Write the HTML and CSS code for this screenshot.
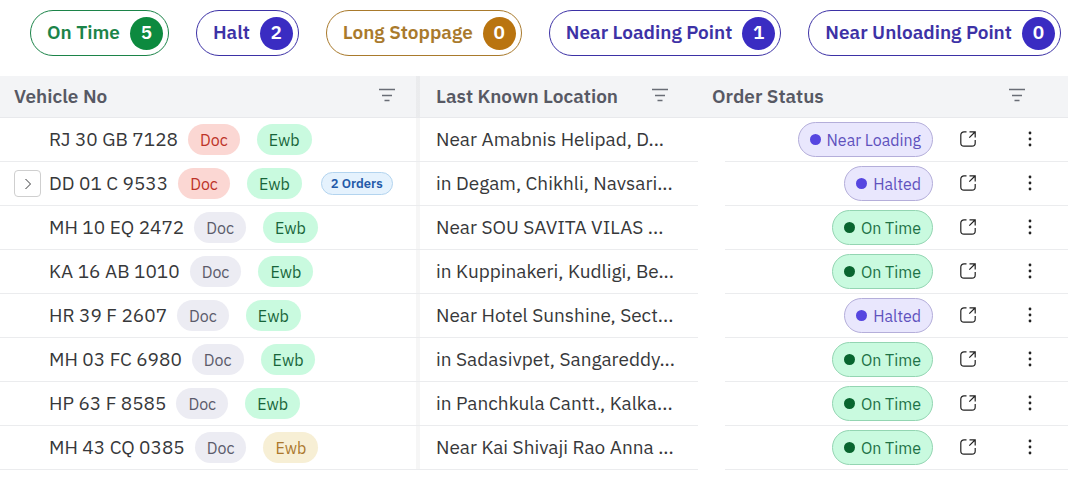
FILE: index.html
```html
<!DOCTYPE html>
<html lang="en">
<head>
<meta charset="utf-8">
<title>Vehicles</title>
<link rel="stylesheet" href="styles.css">
<script src="table.js" defer></script>
</head>
<body>
<svg class="sprite" aria-hidden="true">
  <symbol id="filter" viewBox="0 0 16 14"><path d="M0 1.500h16M3 7.500h10M5.500 12.500h5"/></symbol>
  <symbol id="open" viewBox="0 0 16 16"><path d="M6.500 .8H4a3.200 3.200 0 0 0-3.200 3.200v8A3.200 3.200 0 0 0 4 15.200h8a3.200 3.200 0 0 0 3.200-3.200V9M9.500 .8h5.700v5.700M15 1L9.300 6.700"/></symbol>
  <symbol id="more" viewBox="0 0 4 16"><circle cx="2" cy="2" r="1.400"/><circle cx="2" cy="8" r="1.400"/><circle cx="2" cy="14" r="1.400"/></symbol>
  <symbol id="chevron" viewBox="0 0 8 12"><path d="M1.500 1l5 5-5 5"/></symbol>
</svg>

<nav class="chips" aria-label="Status filters">
  <button class="chip green" type="button"><span class="text">On Time</span><span class="count">5</span></button>
  <button class="chip indigo" type="button"><span class="text">Halt</span><span class="count">2</span></button>
  <button class="chip amber" type="button"><span class="text">Long Stoppage</span><span class="count">0</span></button>
  <button class="chip indigo" type="button"><span class="text">Near Loading Point</span><span class="count">1</span></button>
  <button class="chip indigo" type="button"><span class="text">Near Unloading Point</span><span class="count">0</span></button>
</nav>

<table class="vehicles">
  <colgroup><col class="col-vehicle"><col class="col-location"><col></colgroup>
  <thead>
    <tr>
      <th class="vehicle" scope="col"><div class="head">Vehicle No <button class="icon" type="button" aria-label="Filter vehicle"><svg class="i-filter"><use href="#filter"/></svg></button></div></th>
      <th class="location" scope="col"><div class="head">Last Known Location <button class="icon" type="button" aria-label="Filter location"><svg class="i-filter"><use href="#filter"/></svg></button></div></th>
      <th class="status" scope="col"><div class="head">Order Status <button class="icon" type="button" aria-label="Filter status"><svg class="i-filter"><use href="#filter"/></svg></button></div></th>
    </tr>
  </thead>
  <tbody id="rows"></tbody>
</table>
</body>
</html>
```
FILE: styles.css
```css
* { box-sizing: border-box; }

body {
  margin: 0;
  background: #fff;
  color: #37383a;
  font-family: "IBM Plex Sans", Roboto, "Liberation Sans", sans-serif;
  font-size: 19px;
  line-height: 24px;
}

button { font: inherit; color: inherit; background: none; border: 0; padding: 0; }
svg { display: block; fill: none; stroke: currentColor; }
.sprite { display: none; }
.text, .icon { padding-bottom: 2px; }

.chips { display: flex; gap: 27px; padding: 10px 0 20px 30px; }
.chip {
  display: flex;
  align-items: center;
  gap: 10px;
  height: 46px;
  padding: 0 5px 0 16px;
  border: 1px solid currentColor;
  border-radius: 23px;
  font-weight: 600;
  white-space: nowrap;
}
.count {
  width: 33px;
  height: 33px;
  border-radius: 50%;
  color: #fff;
  line-height: 31px;
  text-align: center;
}
.green { color: #1c8449; }
.green .count { background: #0d8a3f; }
.indigo { color: #3d32a6; }
.indigo .count { background: #3a2cc2; }
.amber { color: #a97a2c; }
.amber .count { background: #b97410; }

.vehicles { width: 100%; table-layout: fixed; border-collapse: separate; border-spacing: 0; }
.col-vehicle { width: 420px; }
.col-location { width: 278px; }
th, td { padding: 0; text-align: left; }
th { background: #f3f4f6; color: #575964; font-weight: 600; }
.vehicle { background-image: linear-gradient(#00000009, #00000009); background-position: right; background-size: 4px 100%; background-repeat: no-repeat; }

.head {
  display: flex;
  align-items: center;
  justify-content: space-between;
  height: 42px;
  padding-bottom: 2px;
  border-bottom: 1px solid #e8e9ec;
}
.vehicle .head { padding-left: 14px; padding-right: 25px; }
.location .head { padding-left: 16px; padding-right: 30px; }
.status .head { padding-left: 14px; padding-right: 43px; }

.cell { display: flex; align-items: center; height: 44px; border-bottom: 1px solid #ebecee; }
.vehicle .cell { padding-left: 14px; }
.location .cell { padding-left: 16px; white-space: nowrap; }
.status .cell { justify-content: flex-end; margin-left: 27px; padding-right: 36px; }

.slot { width: 27px; margin-right: 8px; }
.expand {
  display: grid;
  place-items: center;
  width: 27px;
  height: 27px;
  border: 1px solid #cfcfcf;
  border-radius: 4px;
}
.tag {
  height: 31px;
  margin-left: 10px;
  padding: 0 12px;
  border-radius: 16px;
  font-size: 16px;
  line-height: 32px;
}
.tag + .tag { margin-left: 17px; }
.tag.red { background: #fbd7d3; color: #bd3328; }
.tag.mint { background: #c9fadf; color: #17653a; }
.tag.gray { background: #ececf3; color: #5b5b6b; }
.tag.sand { background: #f7efd5; color: #ab782d; }
.orders {
  height: 23px;
  margin-left: 19px;
  padding: 0 9px;
  border: 1px solid #b3d4ef;
  border-radius: 12px;
  background: #e5f2fd;
  color: #2359a8;
  font-size: 13px;
  font-weight: 600;
  line-height: 21px;
}

.pill {
  display: flex;
  align-items: center;
  gap: 6px;
  height: 35px;
  padding: 0 11px;
  border: 1px solid;
  border-radius: 18px;
  font-size: 16px;
  white-space: nowrap;
}
.pill::before { content: ""; width: 11px; height: 11px; border-radius: 50%; background: var(--dot); }
.pill.violet { --dot: #5646e0; background: #e9e7fd; border-color: #b4aeda; color: #5f52bd; }
.pill.mint { --dot: #08652f; background: #c9fadf; border-color: #93d5b2; color: #207146; }

.icon { color: #696d76; }
.status .cell .icon { color: #222; }
.open { margin-left: 27px; }
.more { margin-left: 52px; }
.i-filter { width: 16px; height: 14px; stroke-width: 1.3; }
.i-open { width: 16px; height: 16px; stroke-width: 1.2; }
.i-more { width: 4px; height: 16px; fill: currentColor; stroke: none; }
.i-chevron { width: 8px; height: 12px; stroke-width: 1; }
```
FILE: table.js
```js
const vehicles = [
  ["RJ 30 GB 7128", "red", "mint", "Near Amabnis Helipad, D...", "Near Loading"],
  ["DD 01 C 9533", "red", "mint", "in Degam, Chikhli, Navsari...", "Halted", "2 Orders"],
  ["MH 10 EQ 2472", "gray", "mint", "Near SOU SAVITA VILAS ...", "On Time"],
  ["KA 16 AB 1010", "gray", "mint", "in Kuppinakeri, Kudligi, Be...", "On Time"],
  ["HR 39 F 2607", "gray", "mint", "Near Hotel Sunshine, Sect...", "Halted"],
  ["MH 03 FC 6980", "gray", "mint", "in Sadasivpet, Sangareddy...", "On Time"],
  ["HP 63 F 8585", "gray", "mint", "in Panchkula Cantt., Kalka...", "On Time"],
  ["MH 43 CQ 0385", "gray", "sand", "Near Kai Shivaji Rao Anna ...", "On Time"]
];

document.getElementById("rows").innerHTML = vehicles.map(([plate, doc, ewb, place, status, orders]) => `
  <tr>
    <td class="vehicle"><div class="cell">
      <div class="slot">${orders ? '<button class="expand" type="button" aria-label="Show orders"><svg class="i-chevron"><use href="#chevron"/></svg></button>' : ""}</div>
      <span class="text">${plate}</span>
      <span class="tag ${doc}">Doc</span>
      <span class="tag ${ewb}">Ewb</span>
      ${orders ? `<span class="orders">${orders}</span>` : ""}
    </div></td>
    <td class="location"><div class="cell"><span class="text">${place}</span></div></td>
    <td class="status"><div class="cell">
      <span class="pill ${status === "On Time" ? "mint" : "violet"}">${status}</span>
      <button class="icon open" type="button" aria-label="Open ${plate}"><svg class="i-open"><use href="#open"/></svg></button>
      <button class="icon more" type="button" aria-label="More for ${plate}"><svg class="i-more"><use href="#more"/></svg></button>
    </div></td>
  </tr>`).join("");
```
